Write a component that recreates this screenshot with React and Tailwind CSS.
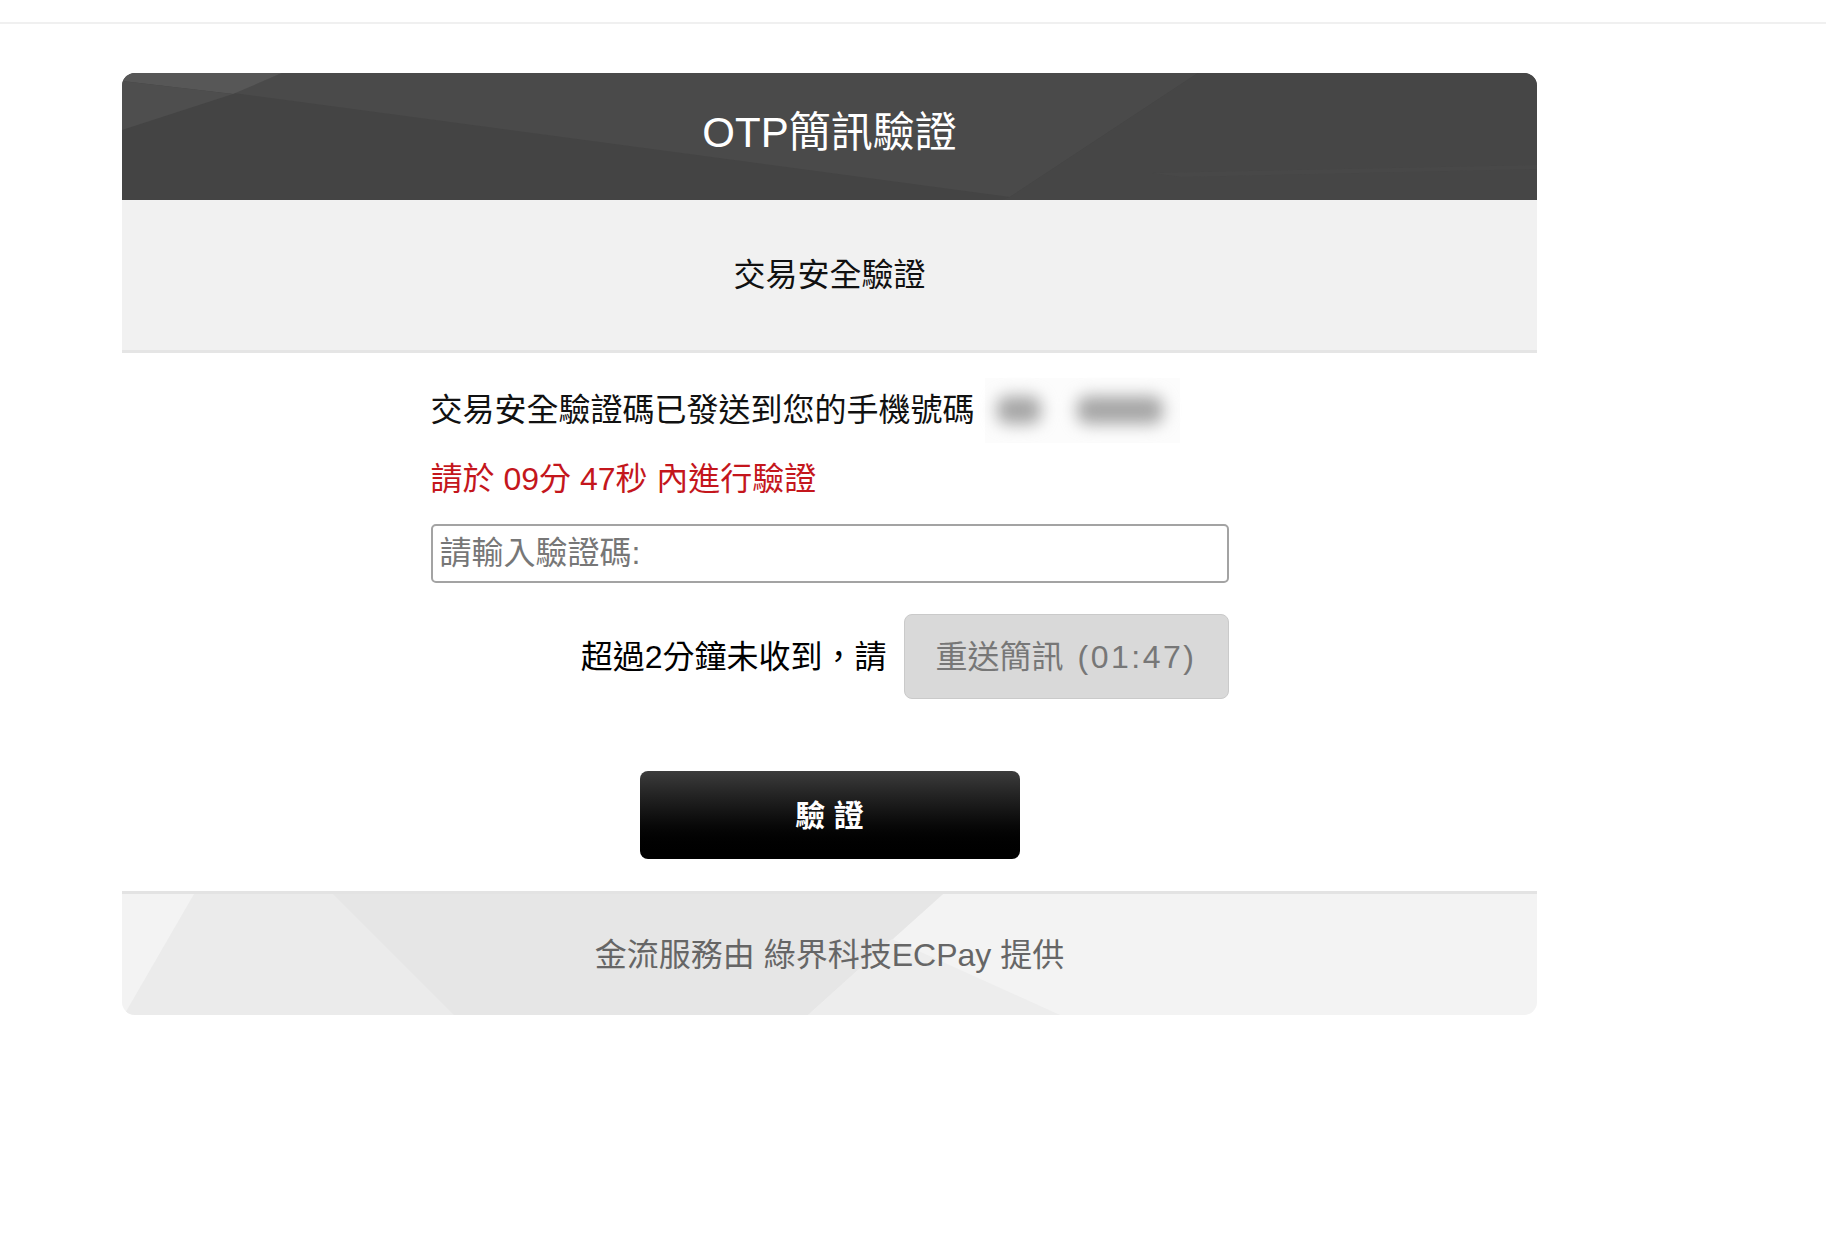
import React from 'react';

const HeaderBg = () => (
  <svg className="absolute inset-0 h-full w-full" viewBox="0 0 1415 127" preserveAspectRatio="none">
    <polygon points="160,0 1076,0 888,124 111,20" fill="#4a4a4a" />
    <polygon points="0,0 160,0 111,21 0,8" fill="#575757" />
    <polygon points="0,8 111,21 0,57" fill="#4e4e4e" />
    <polygon points="1076,0 1415,0 1415,127 880,127 888,124" fill="#464646" />
    <polygon points="1030,100 1415,92 1415,96 1060,104" fill="#4a4a4a" opacity="0.6" />
  </svg>
);

const FooterBg = () => (
  <svg className="absolute inset-0 h-full w-full" viewBox="0 0 1415 121" preserveAspectRatio="none">
    <polygon points="72,0 821,0 686,121 2,121" fill="#ebebeb" />
    <polygon points="211,0 821,0 686,121 332,121" fill="#e6e6e6" />
    <polygon points="686,121 938,121 770,45" fill="#ededed" />
  </svg>
);

const App = () => {
  return (
    <div className="min-h-screen bg-white font-['Liberation_Sans','Noto_Sans_CJK_TC',sans-serif]">

      {/* top bar line */}
      <div className="h-[24px] border-b-2 border-[#f0f0f0]" />

      <div className="ml-[122px] mt-[49px] w-[1415px]">

        {/* Header */}
        <div className="relative h-[127px] overflow-hidden rounded-t-[13px] bg-[#444444]">
          <HeaderBg />
          <h1 className="relative flex h-full items-center justify-center pb-[7px] text-[42px] leading-none text-white">
            OTP簡訊驗證
          </h1>
        </div>

        {/* Sub title */}
        <div className="flex h-[153px] items-center justify-center border-b-[3px] border-[#e5e5e5] bg-[#f1f1f1] text-[32px] text-[#111]">
          交易安全驗證
        </div>

        {/* Body */}
        <div className="mx-auto w-[798px] pt-[33px] pb-[32px]">
          <div className="flex h-[48px] items-center text-[32px] text-[#111]">
            <span>交易安全驗證碼已發送到您的手機號碼</span>
            {/* masked phone number */}
            <span className="ml-[10px] flex h-[65px] w-[195px] items-center bg-[#fcfcfc] pl-[12px]">
              <span className="block h-[28px] w-[44px] rounded-[10px] bg-[#a6a6a6] blur-[8px]" />
              <span className="ml-[36px] block h-[28px] w-[86px] rounded-[10px] bg-[#a6a6a6] blur-[8px]" />
            </span>
          </div>

          <p className="mt-[21px] h-[48px] text-[32px] leading-[48px] text-[#c4161c]">
            請於 09分 47秒 內進行驗證
          </p>

          <input
            type="text"
            placeholder="請輸入驗證碼:"
            className="mt-[21px] block h-[59px] w-full rounded-[5px] border-2 border-[#a3a3a3] px-[7px] text-[32px] text-[#111] outline-none placeholder:text-[#777]"
          />

          <div className="mt-[31px] flex items-center justify-end gap-[17px]">
            <span className="text-[32px] text-black">超過2分鐘未收到，請</span>
            <button className="flex h-[85px] w-[325px] items-center justify-center rounded-[8px] border border-[#cacaca] bg-[#d9d9d9] text-[32px] text-[#777]">
              <span>重送簡訊</span>
              <span className="ml-[14px] tracking-[2.5px]">(01:47)</span>
            </button>
          </div>

          <div className="mt-[72px] flex justify-center">
            <button className="h-[88px] w-[380px] rounded-[8px] bg-linear-to-b from-[#3c3c3c] to-black text-[30px] font-bold text-white">
              驗 證
            </button>
          </div>
        </div>

        {/* Footer */}
        <div className="relative h-[124px] overflow-hidden rounded-b-[13px] border-t-[3px] border-[#e3e3e3] bg-[#f3f3f3]">
          <FooterBg />
          <p className="relative flex h-full items-center justify-center text-[32px] text-[#666]">
            金流服務由 綠界科技ECPay 提供
          </p>
        </div>
      </div>
    </div>
  );
};

export default App;
